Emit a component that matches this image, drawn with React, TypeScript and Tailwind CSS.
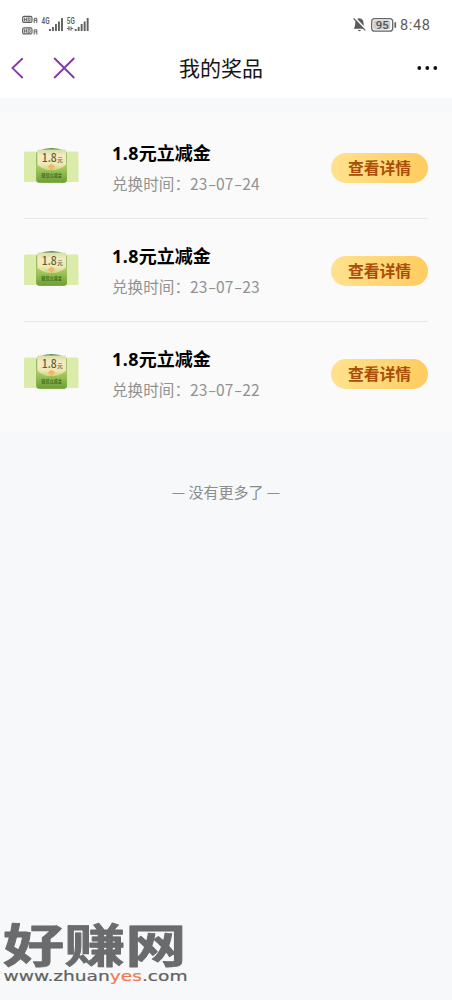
const prizes = [
  { title: '1.8', date: '23-07-24' },
  { title: '1.8', date: '23-07-23' },
  { title: '1.8', date: '23-07-22' },
];

function Signal() {
  return (
    <g fill="#606060">
      <rect x="0" y="10" width="1.9" height="2" />
      <rect x="3" y="8" width="1.9" height="4" />
      <rect x="6" y="5" width="1.9" height="7" />
      <rect x="9" y="2.5" width="1.9" height="9.5" />
      <rect x="12" y="-1" width="1.9" height="13" />
    </g>
  );
}

function HdMark({ y }: { y: number }) {
  return (
    <g transform={`translate(22 ${y})`}>
      <rect x="0.6" y="0.6" width="9.4" height="6" rx="1.4" fill="#ddd" stroke="#606060" strokeWidth="1.1" />
      <path d="M2.5 2v3.4M4.5 2v3.4M2.5 3.7h2M6.2 2v3.4h.8q1.2-.2 1.2-1.7T7 2z" fill="none" stroke="#606060" strokeWidth="0.8" />
      <path d="M12.2 7.3V2.5h2.6v4.8M12.2 4.6h2.6" fill="none" stroke="#606060" strokeWidth="1" />
    </g>
  );
}

function StatusBar() {
  return (
    <svg className="block h-[38px] w-full font-['Roboto',sans-serif]" viewBox="0 0 452 38">
      <HdMark y={15.8} />
      <HdMark y={27.3} />
      <text x="41.5" y="24.2" fontSize="9" fontWeight="600" fill="#606060" textLength="8" lengthAdjust="spacingAndGlyphs">4G</text>
      <g transform="translate(49 19)"><Signal /></g>
      <text x="66.8" y="24.2" fontSize="9" fontWeight="600" fill="#606060" textLength="8" lengthAdjust="spacingAndGlyphs">5G</text>
      <path d="M67 28.5h2.3M69 26.3v4.2M71 26.5v4.2M70.8 28.5h2.4" fill="none" stroke="#606060" strokeWidth="1.1" />
      <g transform="translate(74.7 19)"><Signal /></g>
      <path d="M359.4 18.2c-3 .4-4.2 2.5-4.2 5.2 0 2.4-.5 3.8-1.7 5.4h11.8c-1.2-1.6-1.7-3-1.7-5.4 0-2.7-1.2-4.8-4.2-5.2zM357.7 30h3.4q-1.7 2.4-3.4 0z" fill="#5b5b5b" />
      <path d="M355 18.2L366 29.8" stroke="#fff" strokeWidth="2" />
      <path d="M353.8 18.5L365.3 30.3" stroke="#5b5b5b" strokeWidth="1.1" />
      <rect x="371.7" y="18.7" width="21" height="12.5" rx="3" fill="#fff" stroke="#666" strokeWidth="1.3" />
      <rect x="373.3" y="20.3" width="17" height="9.3" rx="1.5" fill="#cecece" />
      <rect x="394.4" y="22" width="1.7" height="6" rx=".8" fill="#666" />
      <text x="375.7" y="28.8" fontSize="10.5" fontWeight="500" fill="#555" textLength="13" lengthAdjust="spacingAndGlyphs">95</text>
      <text x="400" y="29.9" fontSize="14.5" fill="#5d5d5d" textLength="30" lengthAdjust="spacing">8:48</text>
    </svg>
  );
}

function NavBar() {
  return (
    <div className="relative flex h-[60px] items-start justify-center pt-[14px]">
      <svg className="absolute inset-0 h-[60px] w-full" viewBox="0 0 452 60">
        <path d="M22.7 20.3L12.5 30.1L22.7 40M54.2 20L74.3 40M74.3 20L54.2 40" fill="none" stroke="#873aa3" strokeWidth="1.9" />
        <g fill="#111">
          <circle cx="419.3" cy="30" r="1.9" />
          <circle cx="427.3" cy="30" r="1.9" />
          <circle cx="435.3" cy="30" r="1.9" />
        </g>
      </svg>
      <h1 className="mr-[10px] text-[21px] leading-[30px] whitespace-nowrap text-[#151515]">我的奖品</h1>
    </div>
  );
}

function Coupon({ id }: { id: string }) {
  return (
    <svg className="mt-[2px] block h-[40px] w-[55px] shrink-0 font-['Noto_Sans_CJK_SC',sans-serif]" viewBox="0 0 55 40">
      <defs>
        <linearGradient id={`${id}t`} x2="0" y2="1">
          <stop stopColor="#d4dfa5" />
          <stop offset=".3" stopColor="#f6e9c4" />
          <stop offset=".7" stopColor="#f0e8b8" />
          <stop offset="1" stopColor="#c3d67c" />
        </linearGradient>
        <linearGradient id={`${id}b`} x2="0" y2="1">
          <stop stopColor="#b4d367" />
          <stop offset="1" stopColor="#6d9e35" />
        </linearGradient>
      </defs>
      <rect y="5.5" width="54.5" height="30.5" rx="1.5" fill="#dbeba9" />
      <path d="M14 5Q27.5-1 41 5z" fill="#608b48" />
      <rect x="12.3" y="5" width="30.5" height="31.5" rx="3" fill="#7caa43" />
      <path d="M14.5 3.5h26q1.7 0 1.7 2v19h-29v-19q0-2 1.3-2z" fill={`url(#${id}t)`} />
      <path d="M12.5 18Q19 24 27.5 24.5Q36 24 42.8 18v16q0 2.7-2.7 2.7H15.2q-2.7 0-2.7-2.7z" fill={`url(#${id}b)`} />
      <path d="M27.5 17.5l3.8 3-3.8 3.8-3.8-3.8z" fill="#f2b867" />
      <text x="17.7" y="16.2" fontSize="11.5" fontWeight="500" fill="#5e6036" textLength="15" lengthAdjust="spacingAndGlyphs">1.8</text>
      <text x="33.3" y="15.8" fontSize="5.5" fontWeight="700" fill="#666434">元</text>
      <text x="17.3" y="30.5" fontSize="5" fontWeight="700" fill="#3e701e" textLength="20.5" lengthAdjust="spacingAndGlyphs">微信立减金</text>
    </svg>
  );
}

function ExchangeDate({ date }: { date: string }) {
  const [year, month, day] = date.split('-');
  const dash = <span className="inline-block w-[8.6px] origin-left scale-x-[1.55]">-</span>;
  return (
    <span className="tracking-[0.1px]">
      {year}{dash}{month}{dash}{day}
    </span>
  );
}

function PrizeRow({ title, date, index }: { title: string; date: string; index: number }) {
  return (
    <li className="flex h-[102.8px] items-start border-b border-[#e8e8e8] pt-[28px] last:border-transparent">
      <Coupon id={`c${index}`} />
      <div className="-mt-[5px] ml-[33px] flex-1 whitespace-nowrap">
        <h2 className="text-[18px] leading-[26px] font-bold text-black">
          <span className="font-['Noto_Sans',sans-serif] text-[17.8px] tracking-[0.5px]">{title}</span>元立减金
        </h2>
        <p className="mt-[5px] text-[15.6px] leading-[24px] text-[#929292]">
          兑换时间：<ExchangeDate date={date} />
        </p>
      </div>
      <button className="mt-[9px] flex h-[30px] w-[97px] items-center justify-center rounded-full bg-linear-to-r from-[#ffe28e] to-[#ffcc5e] text-[15.8px] leading-[30px] font-bold text-[#aa4d08]">
        查看详情
      </button>
    </li>
  );
}

function Watermark() {
  return (
    <svg className="absolute top-[915px] left-0 h-[75px] w-[200px] overflow-visible" viewBox="0 0 200 75">
      <text transform="translate(3 47) scale(1.33 1)" fontSize="46" fontWeight="700" fill="#696b6c" stroke="#696b6c" strokeWidth=".8" strokeLinejoin="round" className="font-['Noto_Sans_CJK_SC',sans-serif]">好赚网</text>
      <text x="3.5" y="66.3" fontSize="14" fill="#606263" stroke="#606263" strokeWidth=".2" textLength="184" lengthAdjust="spacingAndGlyphs" className="font-['DejaVu_Sans',sans-serif]">
        www.zhuan<tspan fill="#f27850" stroke="#f27850">yes</tspan>.com
      </text>
    </svg>
  );
}

export default function App() {
  return (
    <main className="relative h-[1000px] w-full overflow-hidden bg-[#f7f8fa] font-['Noto_Sans_CJK_SC',sans-serif]">
      <header className="bg-white">
        <StatusBar />
        <NavBar />
      </header>
      <ul className="mt-[13px] h-[321px] bg-[#fafafa] px-6 pt-[5px]">
        {prizes.map((p, i) => (
          <PrizeRow key={p.date} title={p.title} date={p.date} index={i} />
        ))}
      </ul>
      <p className="mt-[48px] text-center text-[15px] leading-[24px] text-[#8b8c8e]">— 没有更多了 —</p>
      <Watermark />
    </main>
  );
}
